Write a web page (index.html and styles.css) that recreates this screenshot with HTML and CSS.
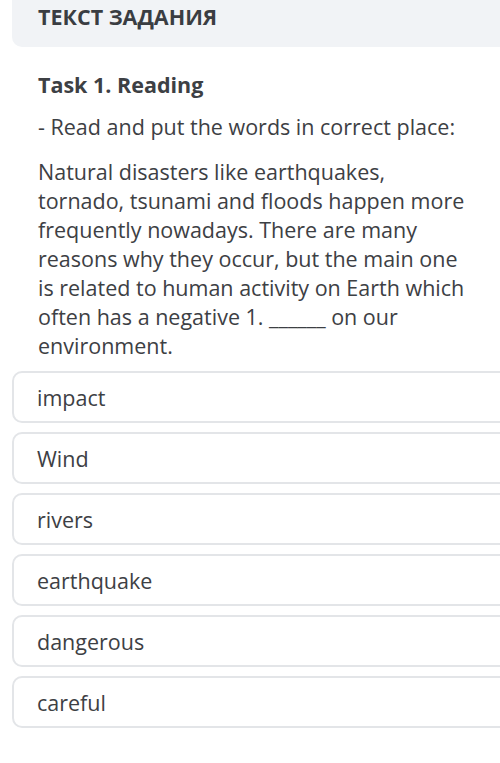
FILE: index.html
```html
<!DOCTYPE html>
<html lang="ru">
  <head>
    <meta charset="UTF-8" />
    <meta name="viewport" content="width=device-width, initial-scale=1.0" />
    <title>Текст задания</title>
    <link rel="stylesheet" href="styles.css">
  </head>

  <body>
    <div class="task-header">ТЕКСТ ЗАДАНИЯ</div>

    <div class="task-body">
      <h2 class="task-title">Task 1. Reading</h2>
      <p class="task-hint">- Read and put the words in correct place:</p>
      <p class="task-text">
        Natural disasters like earthquakes, tornado, tsunami and floods happen more
        frequently nowadays. There are many reasons why they occur, but the main one
        is related to human activity on Earth which often has a negative 1. ______ on our
        environment.
      </p>
    </div>

    <div class="options">
      <div class="option">impact</div>
      <div class="option">Wind</div>
      <div class="option">rivers</div>
      <div class="option">earthquake</div>
      <div class="option">dangerous</div>
      <div class="option">careful</div>
    </div>
  </body>
</html>
```

FILE: styles.css
```css
/* Basic reset */
* {
  margin: 0;
  padding: 0;
  box-sizing: border-box;
}

body {
  font-family: "Open Sans", "Noto Sans", sans-serif;
  background-color: #fff;
  color: #3d4044;
  overflow: hidden;
}

.task-header {
  margin-left: 12px;
  margin-right: -12px;
  height: 47px;
  padding: 0 0 0 26px;
  background-color: #f1f3f6;
  border-radius: 0 0 10px 10px;
  font-size: 21.5px;
  font-weight: 700;
  line-height: 33px;
  color: #3a3d42;
}

.task-body {
  padding: 23px 26px 0 38px;
}

.task-title {
  font-size: 21.5px;
  font-weight: 700;
  line-height: 30px;
  margin-bottom: 12px;
}

.task-hint,
.task-text {
  font-size: 21.5px;
  line-height: 29px;
}

.task-hint {
  margin-bottom: 16px;
}

.options {
  display: flex;
  flex-direction: column;
  gap: 9px;
  margin: 11px -12px 0 12px;
}

.option {
  height: 52px;
  padding: 0 0 0 23px;
  display: flex;
  align-items: center;
  border: 2px solid #e3e5e8;
  border-radius: 10px;
  font-size: 21.5px;
}
```
